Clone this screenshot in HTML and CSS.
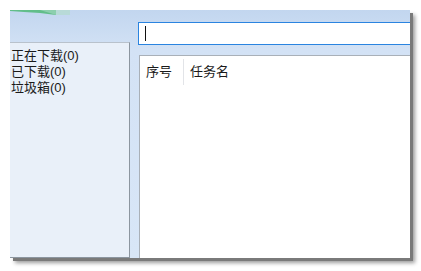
FILE: index.html
```html
<!DOCTYPE html>
<html>
	<head>
		<meta charset="UTF-8">
		<title>下载</title>
		<link rel="stylesheet" href="styles.css">
	</head>
	<body>
		<div class="page">
			<section class="win">
				<div class="side">
					<div class="logo">
						<svg width="120" height="32" viewBox="0 0 120 32">
							<polygon points="0,0 46,0 46,5 30,3 14,2 0,1" fill="#62be8a"/>
							<polygon points="30,0 46,0 46,5" fill="#8ccfae"/>
							<polygon points="46,0 60,0 60,5 46,5" fill="#b3dccd" opacity="0.7"/>
						</svg>
					</div>
					<ul class="cats">
						<li>正在下载(0)</li>
						<li>已下载(0)</li>
						<li>垃圾箱(0)</li>
					</ul>
				</div>
				<div class="main">
					<div class="search"><span class="caret"></span></div>
					<div class="list">
						<div class="head">
							<span class="col num">序号</span>
							<span class="col name">任务名</span>
						</div>
					</div>
				</div>
			</section>
		</div>
	</body>
</html>
```
FILE: styles.css
```css
html,body{
	margin: 0;
	background: #fff;
}
body{
	font-family: "Liberation Sans", "Noto Sans CJK SC", sans-serif;
	font-size: 13px;
	color: #1a1a1a;
}
.page{
	width: 421px;
	height: 271px;
	padding: 10px;
	box-sizing: border-box;
}
.win{
	width: 400px;
	height: 248px;
	display: flex;
	gap: 8px;
	background: linear-gradient(#c2d6ef, #d3e2f5 40px, #d8e6f7);
	box-shadow: 3px 3px 0 #7a7a7a, 5px 5px 4px rgba(0,0,0,0.4);
}
.side{
	width: 120px;
	display: flex;
	flex-direction: column;
}
.logo{
	height: 32px;
	overflow: hidden;
}
.logo svg{
	display: block;
}
.cats{
	flex: 1;
	margin: 0;
	padding: 5px 0 0 1px;
	list-style: none;
	background: #e9f0f9;
	border-top: 1px solid #b9c2cc;
	border-right: 1px solid #8c96a0;
	border-bottom: 1px solid #8c96a0;
	line-height: 16px;
}
.main{
	flex: 1;
	display: flex;
	flex-direction: column;
	padding-top: 12px;
	gap: 10px;
}
.search{
	height: 21px;
	background: #fff;
	border: 1px solid #2a84e0;
	border-right: none;
	display: flex;
	align-items: center;
	padding-left: 6px;
}
.caret{
	width: 1px;
	height: 15px;
	background: #111;
}
.list{
	flex: 1;
	background: #fff;
	border-top: 1px solid #a9b0b8;
	border-left: 1px solid #a9b0b8;
	margin-left: 1px;
}
.head{
	display: flex;
	height: 27px;
	align-items: center;
	padding-top: 2px;
}
.col{
	line-height: 26px;
}
.num{
	padding: 0 11px 0 6px;
	border-right: 1px solid #e2e4e8;
}
.name{
	padding-left: 6px;
}
```
